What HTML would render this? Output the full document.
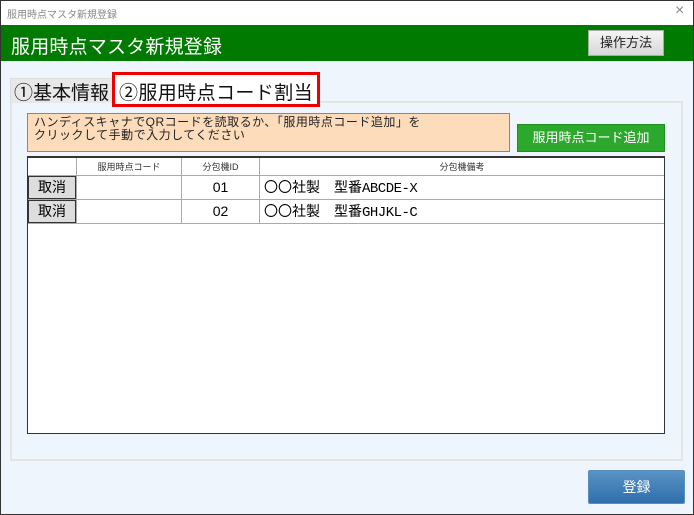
<!DOCTYPE html>
<html><head><meta charset="utf-8"><style>
*{margin:0;padding:0;box-sizing:border-box}
body{width:694px;height:515px;overflow:hidden;background:#eef5fc;font-family:"Liberation Sans","Noto Sans CJK JP",sans-serif;position:relative}
.a{position:absolute}
.j{font-family:"Noto Sans CJK JP",sans-serif}
</style></head><body>
<div class="a" style="left:0;top:0;width:694px;height:515px;border:1px solid #333"></div>
<div class="a" style="left:1px;top:1px;width:692px;height:24px;background:#fff"></div>
<div class="a" style="left:7px;top:6px;font-size:10px;color:#888">服用時点マスタ新規登録</div>
<div class="a" style="left:675px;top:2px;font-size:16px;color:#888">×</div>
<div class="a" style="left:1px;top:25px;width:692px;height:36px;background:#007a00"></div>
<div class="a" style="left:11px;top:32px;font-size:19px;color:#fff;letter-spacing:0.2px">服用時点マスタ新規登録</div>
<div class="a" style="left:588px;top:30px;width:76px;height:26px;background:linear-gradient(#f4f4f4,#d8d8d8);border:1px solid #aaa;font-size:13px;text-align:center;line-height:24px;color:#222">操作方法</div>
<div class="a" style="left:10px;top:101px;width:673px;height:360px;background:#eef5fc;border:2px solid #e4e4e4"></div>
<div class="a" style="left:10px;top:78px;width:104px;height:25px;background:#e8e8e8;border:1px solid #ddd;border-bottom:none"></div>
<div class="a" style="left:14px;top:78px;font-size:19px;color:#111">①基本情報</div>
<div class="a" style="left:112px;top:72px;width:208px;height:35px;background:#fff;border:3px solid #e00"></div>
<div class="a" style="left:119px;top:78px;font-size:19px;color:#111;letter-spacing:0.4px">②服用時点コード割当</div>
<div class="a" style="left:27px;top:113px;width:483px;height:39px;background:#fddcbc;border:1px solid #888"></div>
<div class="a" style="left:34px;top:116px;font-size:12px;line-height:13px;color:#222;letter-spacing:0.5px">ハンディスキャナでQRコードを読取るか、「服用時点コード追加」を<br>クリックして手動で入力してください</div>
<div class="a" style="left:517px;top:124px;width:148px;height:28px;background:#2ca82c;border:1px solid #1d8f1d;font-size:13px;color:#fff;text-align:center;line-height:26px">服用時点コード追加</div>
<div class="a" style="left:27px;top:156px;width:638px;height:278px;background:#fff;border:1px solid #333;border-top:2px solid #333"></div>
<div class="a" style="left:28px;top:175px;width:636px;height:1px;background:#aaa"></div>
<div class="a" style="left:28px;top:199px;width:636px;height:1px;background:#aaa"></div>
<div class="a" style="left:28px;top:223px;width:636px;height:1px;background:#aaa"></div>
<div class="a" style="left:76px;top:158px;width:1px;height:65px;background:#aaa"></div>
<div class="a" style="left:181px;top:158px;width:1px;height:65px;background:#aaa"></div>
<div class="a" style="left:259px;top:158px;width:1px;height:65px;background:#aaa"></div>
<div class="a" style="left:77px;top:160px;width:104px;text-align:center;font-size:9px;color:#333">服用時点コード</div>
<div class="a" style="left:182px;top:160px;width:77px;text-align:center;font-size:9px;color:#333">分包機ID</div>
<div class="a" style="left:260px;top:160px;width:404px;text-align:center;font-size:9px;color:#333">分包機備考</div>
<div class="a" style="left:28px;top:176px;width:48px;height:23px;background:#ddd;border:1px solid #333;font-size:14px;text-align:center;line-height:21px">取消</div>
<div class="a" style="left:28px;top:200px;width:48px;height:23px;background:#ddd;border:1px solid #333;font-size:14px;text-align:center;line-height:21px">取消</div>
<div class="a" style="left:182px;top:179px;width:77px;text-align:center;font-size:14px">01</div>
<div class="a" style="left:182px;top:203px;width:77px;text-align:center;font-size:14px">02</div>
<div class="a j" style="left:264px;top:177px;font-size:14px;line-height:20px">〇〇社製　型番<span style="font-family:'Liberation Mono',monospace;letter-spacing:-0.5px">ABCDE-X</span></div>
<div class="a j" style="left:264px;top:201px;font-size:14px;line-height:20px">〇〇社製　型番<span style="font-family:'Liberation Mono',monospace;letter-spacing:-0.5px">GHJKL-C</span></div>
<div class="a" style="left:588px;top:470px;width:97px;height:34px;background:linear-gradient(#5a93c4,#2f6fad);border:1px solid #5b8ec0;border-radius:2px;font-size:14px;color:#fff;text-align:center;line-height:32px">登録</div>
</body></html>
